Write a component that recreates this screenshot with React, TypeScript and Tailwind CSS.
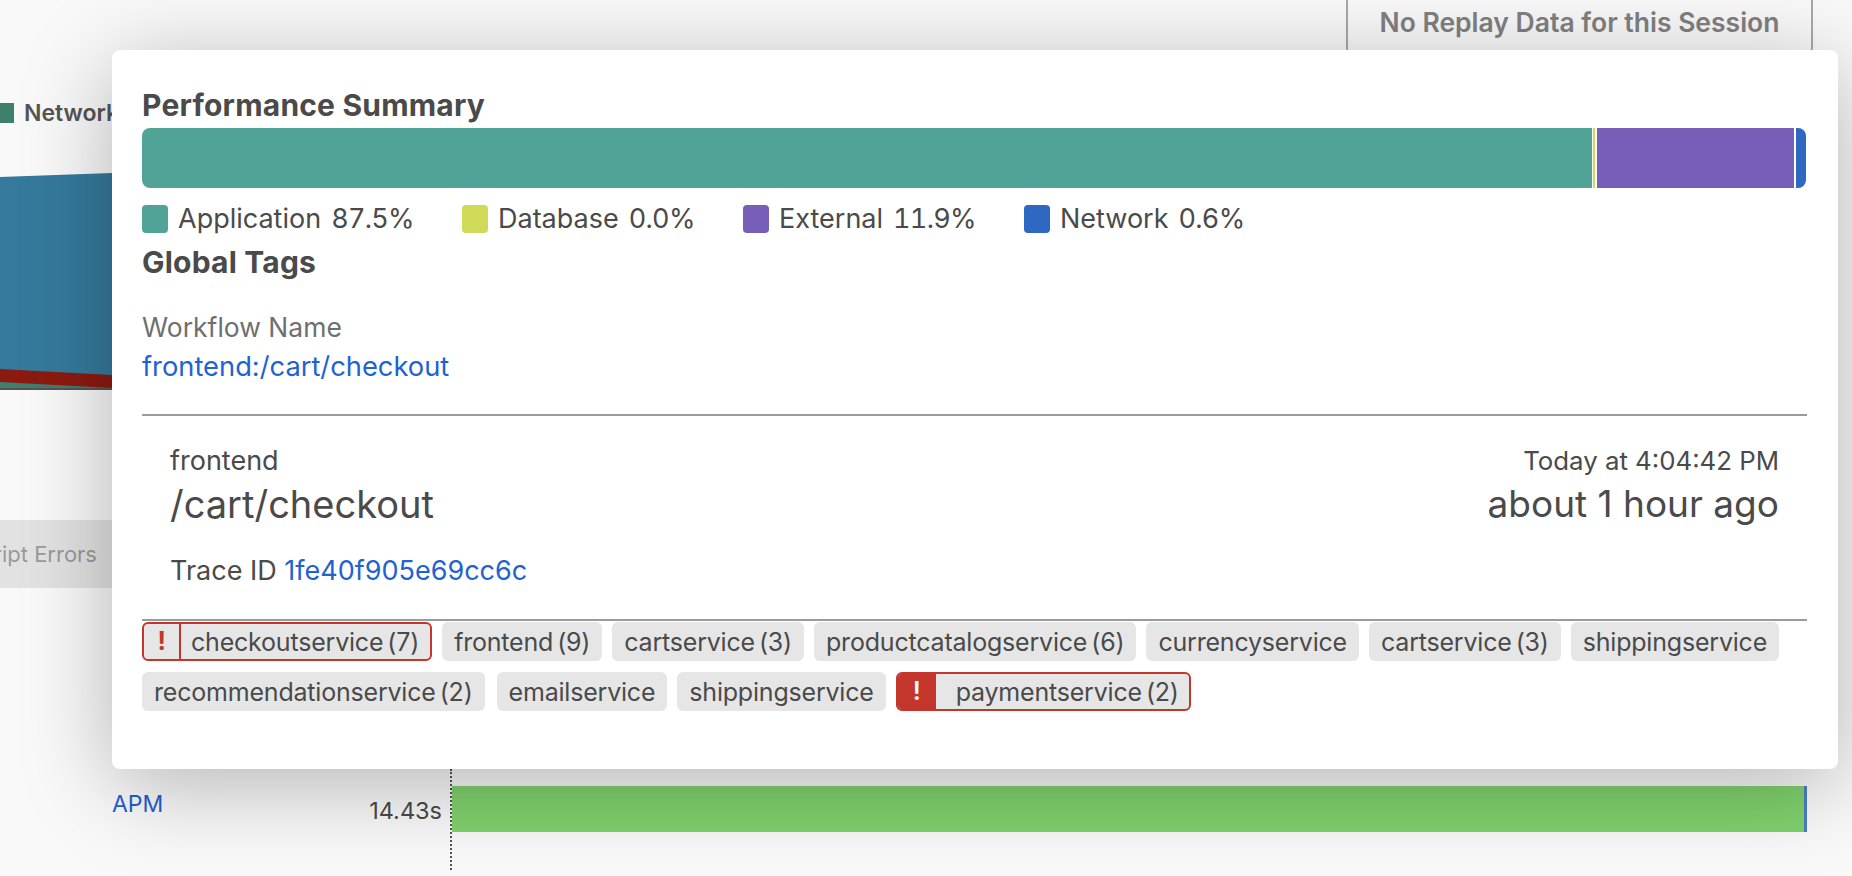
const sans = "font-['Inter','Liberation_Sans',sans-serif]"

const legend = [
  { label: "Application", value: "87.5%", color: "bg-[#52a397]", width: "w-[320px]" },
  { label: "Database", value: "0.0%", color: "bg-[#cfda58]", width: "w-[281px]" },
  { label: "External", value: "11.9%", color: "bg-[#775eb9]", width: "w-[281px]" },
  { label: "Network", value: "0.6%", color: "bg-[#2f68c0]", width: "w-[240px]" },
]

function Tag({ name, count, className }: { name: string; count?: number; className?: string }) {
  return (
    <span className={`flex h-[39px] items-center rounded-md bg-[#e6e6e6] px-3 pt-0.5 text-[25px] tracking-[-0.2px] text-[#4a4a4a] ${className ?? ""}`}>
      {name}
      {count !== undefined && <span className="ml-1">({count})</span>}
    </span>
  )
}

function ErrorTag({ name, count, solid }: { name: string; count: number; solid?: boolean }) {
  return (
    <span className="flex h-[39px] items-stretch overflow-hidden rounded-md border-2 border-[#c4352b] bg-[#e6e6e6] text-[25px] tracking-[-0.2px] text-[#4a4a4a]">
      {solid ? (
        <span className="flex w-[38px] items-center justify-center bg-[#c4352b] font-semibold text-white">!</span>
      ) : (
        <span className="flex w-[37px] items-center justify-center border-r-2 border-[#c4352b] font-bold text-[#c4352b]">!</span>
      )}
      <span className={`flex items-center pt-0.5 ${solid ? "pl-5 pr-2.5" : "pl-2.5 pr-[11px]"}`}>
        {name}
        <span className="ml-1">({count})</span>
      </span>
    </span>
  )
}

export default function App() {
  return (
    <div className={`relative h-[876px] w-[1852px] overflow-hidden bg-[#f9f9f9] ${sans}`}>
      {/* page behind the popover */}
      <div className="flex h-[50px] justify-end pr-[39px]">
        <div className="flex h-[54px] w-[467px] shrink-0 items-center justify-center rounded-b-md border-x-2 border-b-2 border-[#a8a8a8] pb-1.5 text-[26.5px] font-semibold text-[#808080]">
          No Replay Data for this Session
        </div>
      </div>
      <div className="mt-[51px] flex h-6 items-center whitespace-nowrap">
        <span className="h-[20px] w-[14px] shrink-0 bg-[#3f7f6e]" />
        <span className="ml-2.5 text-[23px] font-semibold text-[#555555]">Network</span>
      </div>
      <svg className="mt-[48px] block" width="112" height="217" viewBox="0 0 112 217">
        <polygon points="0,4 112,0 112,217 0,217" fill="#357a9c" />
        <polygon points="0,196 112,202 112,217 0,217" fill="#8c1a10" />
        <polygon points="0,209 112,215 112,217 0,215" fill="#3f7f6e" />
        <rect x="0" y="215" width="112" height="2" fill="#555555" />
      </svg>
      <div className="mt-[130px] flex h-[68px] w-[112px] items-center justify-end whitespace-nowrap bg-[#e2e2e2] pr-[15px] text-[22px] text-[#9a9a9a]">
        <span className="shrink-0">Script Errors</span>
      </div>
      <div className="mt-[181px] flex h-[101px] items-start pl-[112px] pr-[45px]">
        <span className="w-[250px] pt-[21px] text-[23px] leading-7 text-[#1f62d0]">APM</span>
        <span className="w-[88px] pr-2 pt-[28px] text-right text-[23.5px] leading-7 text-[#4a4a4a]">14.43s</span>
        <div className="h-full flex-1 border-l-2 border-dotted border-[#555555] pt-[17px]">
          <div className="flex h-[46px] justify-end bg-[#80d26d]">
            <span className="w-[3px] bg-[#4a7fc4]" />
          </div>
        </div>
      </div>

      {/* popover */}
      <div className="absolute left-[112px] top-[50px] h-[719px] w-[1726px] rounded-lg bg-white pl-[30px] pr-[31px] pt-[36px] text-[#4a4a4a] shadow-[0_16px_90px_rgba(0,0,0,0.28)]">
        <h2 className="text-[30px] font-bold leading-[38px] tracking-[0.2px] text-[#4a4a4a]">Performance Summary</h2>
        <div className="mt-1 flex h-[60px] w-[1664px] overflow-hidden rounded-lg">
          <div className="w-[1450px] bg-[#52a397]" />
          <div className="ml-[1px] w-[2px] bg-[#cfda58]" />
          <div className="ml-[2px] w-[197px] bg-[#775eb9]" />
          <div className="ml-[2px] flex-1 bg-[#2f68c0]" />
        </div>
        <div className="mt-[17px] flex h-7 items-center">
          {legend.map((item) => (
            <div key={item.label} className={`flex items-center text-[27px] ${item.width}`}>
              <span className={`h-[28px] w-[26px] rounded ${item.color}`} />
              <span className="ml-[10px]">{item.label}</span>
              <span className="ml-2.5 tracking-[-0.7px] tabular-nums">{item.value}</span>
            </div>
          ))}
        </div>
        <h2 className="mt-[10px] text-[30px] font-bold leading-[38px] tracking-[0.2px]">Global Tags</h2>
        <div className="mt-[28px] text-[26.5px] leading-[36px] text-[#6f6f6f]">Workflow Name</div>
        <a className="mt-1 block text-[27.3px] leading-[36px] text-[#1f62d0]">frontend:/cart/checkout</a>
        <div className="mt-[29px] h-0.5 w-[1665px] bg-[#9b9b9b]" />

        <div className="mt-[27px] flex w-[1665px] justify-between px-7">
          <div>
            <div className="text-[27px] leading-[36px]">frontend</div>
            <div className="mt-px text-[38px] leading-[48px]">/cart/checkout</div>
          </div>
          <div className="text-right">
            <div className="text-[25.8px] leading-[36px]">Today at 4:04:42 PM</div>
            <div className="mt-px text-[37px] leading-[48px]">about 1 hour ago</div>
          </div>
        </div>
        <div className="mt-[25px] px-7 text-[27px] leading-[36px]">
          Trace ID <a className="text-[#1f62d0]">1fe40f905e69cc6c</a>
        </div>
        <div className="mt-[30px] h-0.5 w-[1665px] bg-[#9b9b9b]" />

        <div className="mt-[1px] flex flex-wrap gap-x-[10px] gap-y-[11px]">
          <ErrorTag name="checkoutservice" count={7} />
          <Tag name="frontend" count={9} />
          <Tag name="cartservice" count={3} />
          <Tag name="productcatalogservice" count={6} />
          <Tag name="currencyservice" />
          <Tag name="cartservice" count={3} />
          <Tag name="shippingservice" />
          <Tag name="recommendationservice" count={2} />
          <Tag name="emailservice" className="ml-[2px]" />
          <Tag name="shippingservice" />
          <ErrorTag name="paymentservice" count={2} solid />
        </div>
      </div>
    </div>
  )
}
